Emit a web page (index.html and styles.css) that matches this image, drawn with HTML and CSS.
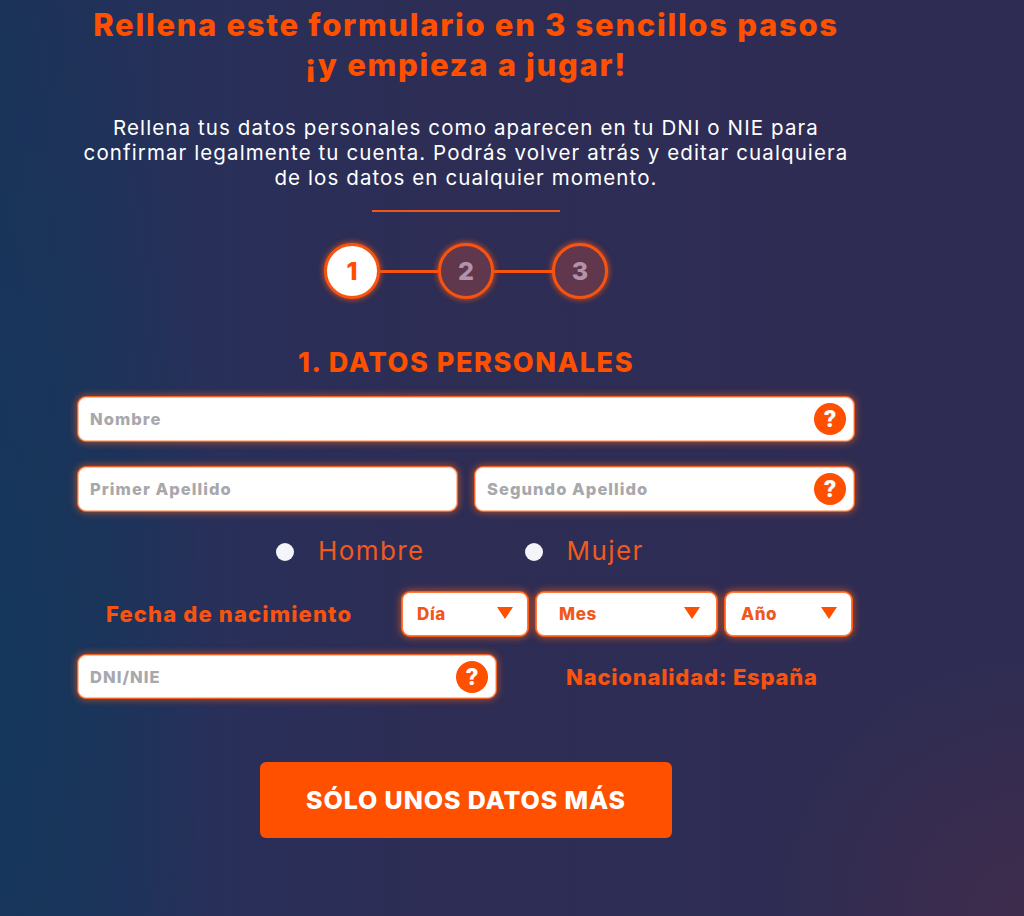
FILE: index.html
```html
<!DOCTYPE html>
<html lang="es">
<head>
<meta charset="utf-8">
<title>Registro</title>
<link rel="stylesheet" href="styles.css">
</head>
<body>
<main class="page">
  <h1 class="title">Rellena este formulario en 3 sencillos pasos<br>¡y empieza a jugar!</h1>
  <p class="intro">Rellena tus datos personales como aparecen en tu DNI o NIE para<br>confirmar legalmente tu cuenta. Podrás volver atrás y editar cualquiera<br>de los datos en cualquier momento.</p>
  <div class="divider"></div>
  <div class="steps">
    <span class="step active">1</span><span class="link"></span><span class="step">2</span><span class="link"></span><span class="step">3</span>
  </div>
  <h2 class="section">1. DATOS PERSONALES</h2>
  <form class="form">
    <div class="field"><span class="ph">Nombre</span><span class="help">?</span></div>
    <div class="row two">
      <div class="field"><span class="ph">Primer Apellido</span></div>
      <div class="field"><span class="ph">Segundo Apellido</span><span class="help">?</span></div>
    </div>
    <div class="gender">
      <span class="radio"></span><span class="radio-label">Hombre</span>
      <span class="radio second"></span><span class="radio-label">Mujer</span>
    </div>
    <div class="birth">
      <span class="birth-label">Fecha de nacimiento</span>
      <div class="select day"><span>Día</span><i class="arrow"></i></div>
      <div class="select month"><span>Mes</span><i class="arrow"></i></div>
      <div class="select year"><span>Año</span><i class="arrow"></i></div>
    </div>
    <div class="row id">
      <div class="field dni"><span class="ph">DNI/NIE</span><span class="help">?</span></div>
      <span class="nation">Nacionalidad: España</span>
    </div>
    <button type="button" class="cta">SÓLO UNOS DATOS MÁS</button>
  </form>
</main>
</body>
</html>
```
FILE: styles.css
```css
* { box-sizing: border-box; }
html, body { margin: 0; height: 916px; overflow: hidden; }
body {
  font-family: "Inter", "Liberation Sans", sans-serif;
  color: #fff;
  background:
    radial-gradient(circle at 100% 100%, #3f2c4d 0, rgba(63,44,77,0) 260px),
    radial-gradient(ellipse 220px 800px at 0 75%, #15375c 0, rgba(21,55,92,0) 100%),
    linear-gradient(90deg, #1c3258 0, #28305a 200px, #2d2d55 420px, #2f2c53 1024px);
}
.page { width: 932px; display: flex; flex-direction: column; align-items: center; padding-top: 5px; }
.title { margin: 0; width: 100%; text-align: center; font-size: 31px; line-height: 40px; font-weight: 800; color: #ff5000; letter-spacing: 1.7px; }
.intro { margin: 30px 0 0; text-align: center; font-size: 20.5px; line-height: 25px; font-weight: 400; letter-spacing: 1.1px; }
.divider { width: 188px; height: 2px; background: #f2551a; margin-top: 20px; }
.steps { display: flex; align-items: center; margin-top: 31px; }
.step { width: 56px; height: 56px; border-radius: 50%; border: 3px solid #f9540f; box-shadow: 0 0 6px #f9540f; background: #60374d; color: #b493a8; display: flex; align-items: center; justify-content: center; font-size: 25px; font-weight: 800; }
.step.active { background: #fff; color: #ff5000; }
.link { width: 58px; height: 3px; background: #f9540f; }
.section { margin: 48px 0 0; font-size: 27px; line-height: 32px; font-weight: 800; color: #ff5000; letter-spacing: 1.56px; }
.form { width: 776px; margin-top: 18px; display: flex; flex-direction: column; }
.field { height: 44px; background: #fff; border-radius: 8px; border: 1px solid #ffc09c; box-shadow: 0 0 0 1px #f0642a, 0 0 7px 2px rgba(235,95,30,.6); display: flex; align-items: center; justify-content: space-between; padding: 0 7px 0 11px; }
.ph { font-size: 16.5px; font-weight: 800; color: #a8a8ac; letter-spacing: 1.05px; }
.help { width: 32px; height: 32px; border-radius: 50%; background: #ff5000; color: #fff; display: flex; align-items: center; justify-content: center; font-family: "Roboto", sans-serif; font-size: 24px; font-weight: 900; }
.row { display: flex; }
.two { gap: 18px; margin-top: 26px; }
.two .field { flex: 1; }
.gender { display: flex; align-items: center; height: 38px; margin-top: 20px; padding-left: 198px; }
.radio { width: 18px; height: 18px; border-radius: 50%; background: #f4f5fa; margin-top: 4px; }
.radio.second { margin-left: 100px; }
.radio-label { margin-left: 24px; font-size: 26px; color: #f05a1c; letter-spacing: 1.4px; }
.birth { display: flex; align-items: center; gap: 8px; margin-top: 23px; padding-left: 28px; }
.birth-label { width: 288px; font-size: 22px; font-weight: 800; color: #f9540f; letter-spacing: 1.15px; }
.select { height: 44px; background: #fff; border-radius: 8px; border: 1px solid #ff7a3a; box-shadow: 0 0 0 1px #f95a14, 0 0 7px 2px rgba(240,90,20,.65); display: flex; align-items: center; justify-content: space-between; padding: 0 14px; font-size: 17px; font-weight: 800; color: #f0571a; letter-spacing: .6px; }
.day { width: 126px; }
.month { width: 181px; padding: 0 16px 0 22px; }
.year { width: 127px; padding-left: 15px; }
.arrow { width: 0; height: 0; border-left: 8px solid transparent; border-right: 8px solid transparent; border-top: 12px solid #ff5000; margin-top: -3px; }
.id { align-items: center; margin-top: 19px; }
.dni { width: 418px; height: 43px; }
.nation { margin-left: 70px; font-size: 22px; font-weight: 800; color: #f9540f; letter-spacing: .8px; }
.cta { align-self: center; width: 412px; height: 76px; margin-top: 64px; border: 0; border-radius: 6px; background: #ff5000; color: #fff; font-family: inherit; font-size: 25px; font-weight: 800; letter-spacing: .9px; }
```
